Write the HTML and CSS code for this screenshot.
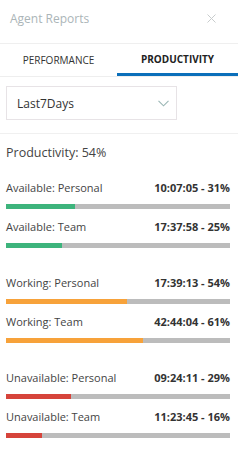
FILE: index.html
```html
<!DOCTYPE html>
<html>
<head>
<meta charset="utf-8">
<link rel="stylesheet" href="styles.css">
</head>
<body>
<div class="panel">
  <div class="header">
    <span class="title">Agent Reports</span>
    <svg class="close" width="9" height="9" viewBox="0 0 9 9"><path d="M0.5 0.5L8.5 8.5M8.5 0.5L0.5 8.5" stroke="#c8cccd" stroke-width="1"/></svg>
  </div>
  <div class="tabs">
    <div class="tab">PERFORMANCE</div>
    <div class="tab active">PRODUCTIVITY</div>
  </div>
  <div class="filter">
    <div class="select">
      <span>Last7Days</span>
      <svg width="11" height="7" viewBox="0 0 11 7"><path d="M0.5 0.8L5.5 5.8L10.5 0.8" fill="none" stroke="#9bb7b5" stroke-width="1.1"/></svg>
    </div>
  </div>
  <div class="summary">Productivity: 54%</div>
  <div class="groups">
    <div class="group">
      <div class="row"><div class="labels"><span>Available: Personal</span><b>10:07:05 - 31%</b></div><div class="bar"><div class="fill green" style="width:31%"></div></div></div>
      <div class="row"><div class="labels"><span>Available: Team</span><b>17:37:58 - 25%</b></div><div class="bar"><div class="fill green" style="width:25%"></div></div></div>
    </div>
    <div class="group">
      <div class="row"><div class="labels"><span>Working: Personal</span><b>17:39:13 - 54%</b></div><div class="bar"><div class="fill orange" style="width:54%"></div></div></div>
      <div class="row"><div class="labels"><span>Working: Team</span><b>42:44:04 - 61%</b></div><div class="bar"><div class="fill orange" style="width:61%"></div></div></div>
    </div>
    <div class="group">
      <div class="row"><div class="labels"><span>Unavailable: Personal</span><b>09:24:11 - 29%</b></div><div class="bar"><div class="fill red" style="width:29%"></div></div></div>
      <div class="row"><div class="labels"><span>Unavailable: Team</span><b>11:23:45 - 16%</b></div><div class="bar"><div class="fill red" style="width:16%"></div></div></div>
    </div>
  </div>
</div>
</body>
</html>
```
FILE: styles.css
```css
html, body {
  margin: 0;
  padding: 0;
  background: #fff;
}
.panel {
  width: 238px;
  font-family: "Open Sans", "Liberation Sans", sans-serif;
  color: #444;
}
.header {
  height: 43px;
  display: flex;
  align-items: center;
  justify-content: space-between;
  padding: 0 22px 0 10px;
  border-bottom: 1px solid #efefef;
  box-sizing: content-box;
}
.title {
  font-size: 12px;
  color: #abb5b8;
  margin-top: -6px;
}
.close {
  margin-top: -6px;
}
.tabs {
  display: flex;
  height: 32px;
  border-bottom: 1px solid #eeeeee;
}
.tab {
  font-size: 10px;
  color: #333;
  display: flex;
  align-items: center;
  justify-content: center;
  width: 117px;
  box-sizing: border-box;
  padding-bottom: 1px;
}
.tab.active {
  flex: 1;
  font-weight: 700;
  color: #222;
  border-bottom: 3px solid #0b6fba;
  padding-bottom: 0;
}
.filter {
  padding: 9px 0 13px 6px;
  border-bottom: 1px solid #f0f0f0;
}
.select {
  width: 171px;
  height: 34px;
  box-sizing: border-box;
  border: 1px solid #e7e3e6;
  display: flex;
  align-items: center;
  justify-content: space-between;
  padding: 0 7px 0 10px;
  font-size: 12px;
  color: #333;
}
.summary {
  font-size: 12.5px;
  color: #444;
  padding: 10px 0 0 6px;
  height: 34px;
}
.groups {
  padding: 0 8px 0 6px;
}
.group {
  margin-bottom: 17px;
}
.row {
  height: 39px;
}
.labels {
  display: flex;
  justify-content: space-between;
  font-size: 11px;
  line-height: 17px;
  padding-top: 1px;
}
.labels b {
  font-weight: 700;
  color: #333;
}
.bar {
  height: 5px;
  margin-top: 8px;
  background: #bcbcbc;
}
.fill {
  height: 100%;
}
.green { background: #3db47c; }
.orange { background: #f7a23a; }
.red { background: #d6443b; }
```
